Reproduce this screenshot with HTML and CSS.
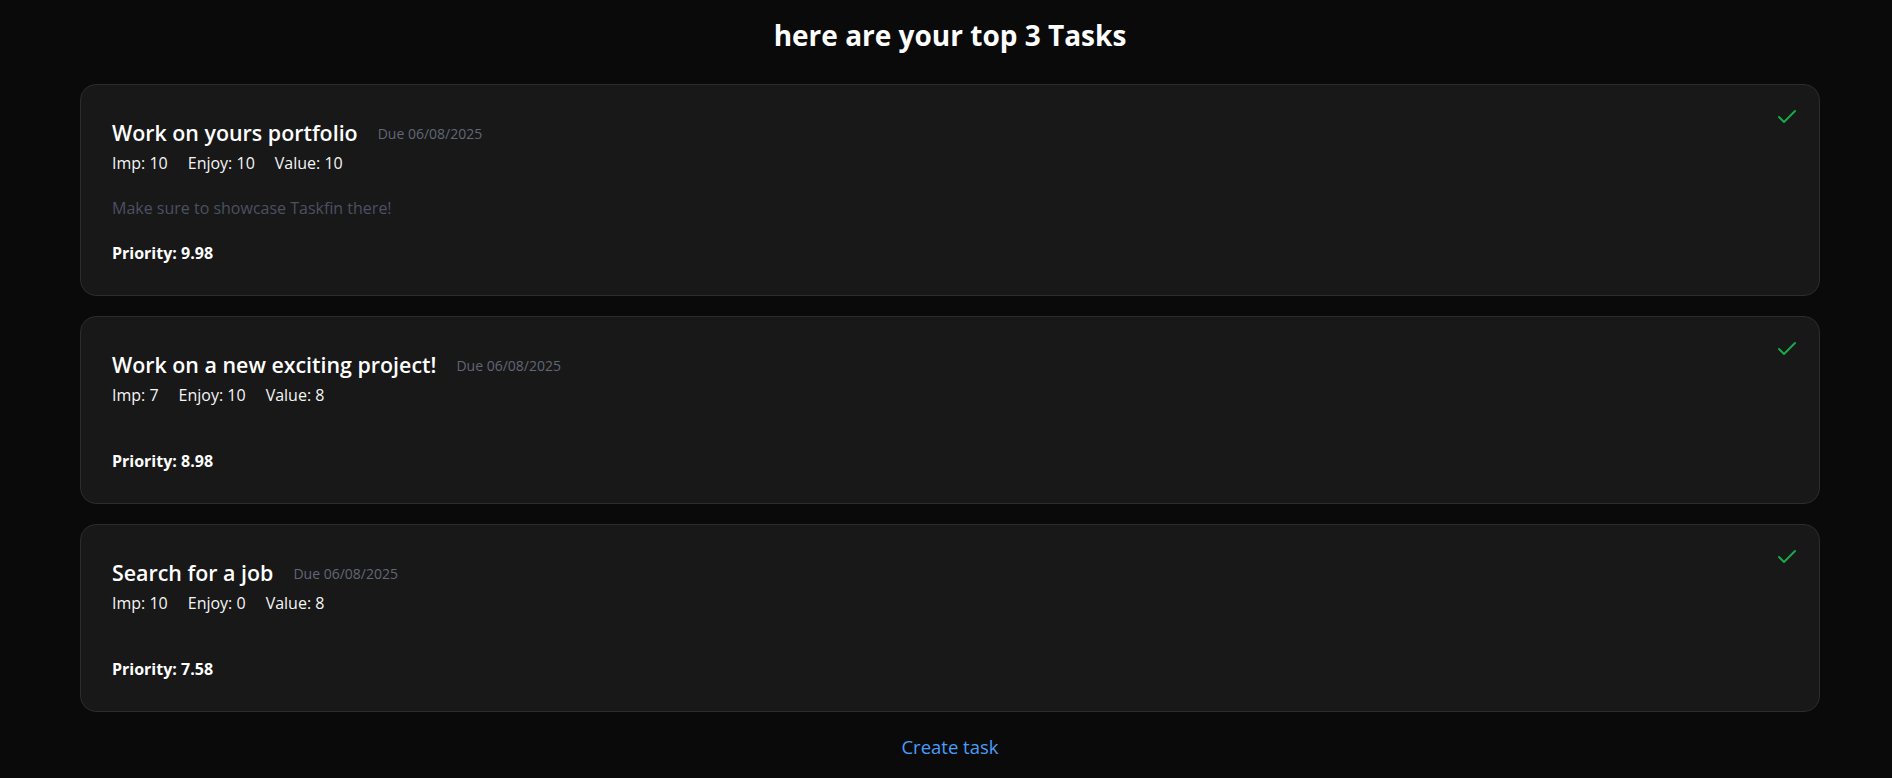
FILE: index.html
```html
<!DOCTYPE html>
<html lang="en">
<head>
<meta charset="utf-8">
<title>Top 3 Tasks</title>
<link rel="stylesheet" href="styles.css">
</head>
<body>
<main class="page">
  <h1 class="page-title">here are your top 3 Tasks</h1>
  <section class="task-list">
    <article class="task-card">
      <button class="done-btn" aria-label="Complete task">
        <svg width="24" height="24" viewBox="0 0 24 24" fill="none" stroke="currentColor" stroke-width="2" stroke-linecap="round" stroke-linejoin="round"><path d="M20 6 9 17l-5-5"/></svg>
      </button>
      <div class="task-head">
        <h2 class="task-name">Work on yours portfolio</h2>
        <span class="task-due">Due 06/08/2025</span>
      </div>
      <div class="task-stats">
        <span>Imp: 10</span>
        <span>Enjoy: 10</span>
        <span>Value: 10</span>
      </div>
      <p class="task-desc">Make sure to showcase Taskfin there!</p>
      <p class="task-priority">Priority: 9.98</p>
    </article>
    <article class="task-card">
      <button class="done-btn" aria-label="Complete task">
        <svg width="24" height="24" viewBox="0 0 24 24" fill="none" stroke="currentColor" stroke-width="2" stroke-linecap="round" stroke-linejoin="round"><path d="M20 6 9 17l-5-5"/></svg>
      </button>
      <div class="task-head">
        <h2 class="task-name">Work on a new exciting project!</h2>
        <span class="task-due">Due 06/08/2025</span>
      </div>
      <div class="task-stats">
        <span>Imp: 7</span>
        <span>Enjoy: 10</span>
        <span>Value: 8</span>
      </div>
      <p class="task-desc"></p>
      <p class="task-priority">Priority: 8.98</p>
    </article>
    <article class="task-card">
      <button class="done-btn" aria-label="Complete task">
        <svg width="24" height="24" viewBox="0 0 24 24" fill="none" stroke="currentColor" stroke-width="2" stroke-linecap="round" stroke-linejoin="round"><path d="M20 6 9 17l-5-5"/></svg>
      </button>
      <div class="task-head">
        <h2 class="task-name">Search for a job</h2>
        <span class="task-due">Due 06/08/2025</span>
      </div>
      <div class="task-stats">
        <span>Imp: 10</span>
        <span>Enjoy: 0</span>
        <span>Value: 8</span>
      </div>
      <p class="task-desc"></p>
      <p class="task-priority">Priority: 7.58</p>
    </article>
  </section>
  <div class="actions">
    <a class="create-link" href="#">Create task</a>
  </div>
</main>
</body>
</html>
```

FILE: styles.css
```css
* {
  box-sizing: border-box;
}

html, body {
  margin: 0;
  background: #0a0a0a;
}

body {
  font-family: "Open Sans", "Noto Sans", "Liberation Sans", sans-serif;
  color: #ffffff;
}

.page {
  padding: 17px 72px 0 80px;
  display: flex;
  flex-direction: column;
}

.page-title {
  margin: 0 0 31px;
  text-align: center;
  font-size: 28px;
  line-height: 36px;
  font-weight: 700;
  color: #ffffff;
}

.task-list {
  display: flex;
  flex-direction: column;
  gap: 20px;
}

.task-card {
  position: relative;
  display: flex;
  flex-direction: column;
  background: #181818;
  border: 1px solid #2c2c2c;
  border-radius: 16px;
  padding: 34px 31px 30px;
}

.done-btn {
  position: absolute;
  top: 12px;
  right: 12px;
  padding: 8px;
  border: 0;
  background: transparent;
  color: #16a94a;
  display: flex;
  cursor: pointer;
}

.task-head {
  display: flex;
  align-items: center;
  gap: 20px;
  margin-bottom: 4px;
}

.task-name {
  margin: 0;
  font-size: 21.4px;
  line-height: 28px;
  font-weight: 600;
  color: #ffffff;
}

.task-due {
  font-size: 14px;
  line-height: 20px;
  color: #606775;
  padding-top: 1px;
}

.task-stats {
  display: flex;
  gap: 20px;
  font-size: 16px;
  line-height: 24px;
  color: #f5f5f5;
}

.task-desc {
  margin: 21px 0;
  font-size: 16px;
  line-height: 24px;
  color: #4a5160;
}

.task-priority {
  margin: 0;
  font-size: 16px;
  line-height: 24px;
  font-weight: 700;
  color: #ffffff;
}

.actions {
  display: flex;
  justify-content: center;
  padding-top: 21px;
}

.create-link {
  font-size: 18.5px;
  line-height: 28px;
  color: #4a9cfa;
  text-decoration: none;
}
```
